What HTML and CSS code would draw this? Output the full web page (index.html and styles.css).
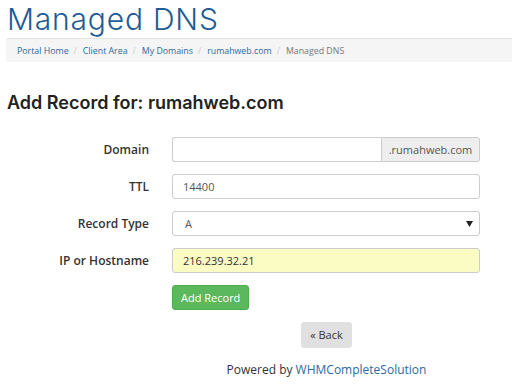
FILE: index.html
```html
<!DOCTYPE html>
<html>
<head>
<meta charset="utf-8">
<link rel="stylesheet" href="styles.css">
</head>
<body>
<div class="page">
  <h1 class="title">Managed DNS</h1>
  <ol class="crumbs">
    <li><a href="#">Portal Home</a></li>
    <li><a href="#">Client Area</a></li>
    <li><a href="#">My Domains</a></li>
    <li><a href="#">rumahweb.com</a></li>
    <li class="active">Managed DNS</li>
  </ol>
  <h2 class="heading">Add Record for: rumahweb.com</h2>
  <form class="form">
    <div class="row">
      <label class="label">Domain</label>
      <div class="group">
        <input class="input grow" type="text" value="">
        <span class="addon">.rumahweb.com</span>
      </div>
    </div>
    <div class="row">
      <label class="label">TTL</label>
      <input class="input" type="text" value="14400">
    </div>
    <div class="row">
      <label class="label">Record Type</label>
      <div class="select">
        <span class="sel-val">A</span>
        <svg class="caret" width="7" height="6" viewBox="0 0 7 6"><path d="M0 0H7L3.5 6Z" fill="#222"/></svg>
      </div>
    </div>
    <div class="row">
      <label class="label">IP or Hostname</label>
      <input class="input yellow" type="text" value="216.239.32.21">
    </div>
    <div class="row btnrow">
      <span class="label"></span>
      <button type="button" class="btn-add">Add Record</button>
    </div>
  </form>
  <div class="center">
    <button type="button" class="btn-back">« Back</button>
    <p class="powered">Powered by <a href="#">WHMCompleteSolution</a></p>
  </div>
</div>
</body>
</html>
```
FILE: styles.css
```css
html, body {
  margin: 0;
  padding: 0;
  background: #fff;
}
body {
  font-family: "Open Sans", "DejaVu Sans", sans-serif;
  color: #333;
  width: 512px;
  overflow: hidden;
}
.page {
  padding: 0 0 0 6px;
}
.title {
  margin: 0;
  padding: 1px 0 0 1px;
  font-family: Inter, "Noto Sans", sans-serif;
  font-weight: 300;
  font-size: 30px;
  line-height: 36px;
  color: #1f5c96;
  letter-spacing: 0.8px;
}
.crumbs {
  list-style: none;
  margin: 1px 0 0 0;
  padding: 0 0 0 11px;
  height: 23px;
  display: flex;
  align-items: center;
  background: #f5f5f5;
  border-top: 1px solid #e2e2e2;
  border-radius: 3px 0 0 3px;
  font-size: 8.8px;
}
.crumbs li {
  color: #777;
}
.crumbs li + li::before {
  content: "/";
  color: #ccc;
  padding: 0 6px 0 5px;
}
.crumbs a {
  color: #2b6a9e;
  text-decoration: none;
}
.heading {
  margin: 29px 0 0 1px;
  font-family: Inter, "Noto Sans", sans-serif;
  font-weight: 600;
  font-size: 18px;
  line-height: 24px;
  color: #222;
}
.form {
  margin-top: 22px;
}
.row {
  display: flex;
  align-items: center;
  margin-bottom: 12px;
  width: 474px;
}
.label {
  width: 143px;
  flex: none;
  text-align: right;
  font-weight: 600;
  font-size: 12px;
  color: #333;
  padding-right: 23px;
}
.input, .select {
  box-sizing: border-box;
  flex: 1;
  height: 25px;
  border: 1px solid #ccc;
  border-radius: 3px;
  padding: 0 10px;
  font-family: "Open Sans", sans-serif;
  font-size: 11px;
  color: #555;
  background: #fff;
  margin: 0;
  min-width: 0;
}
.yellow {
  background: #fafcc4;
  color: #333;
}
.group {
  flex: 1;
  display: flex;
}
.group .input {
  border-radius: 3px 0 0 3px;
  border-right: 0;
}
.addon {
  box-sizing: border-box;
  height: 25px;
  width: 99px;
  display: flex;
  align-items: center;
  justify-content: center;
  background: #eee;
  border: 1px solid #ccc;
  border-radius: 0 3px 3px 0;
  font-size: 11px;
  color: #555;
}
.select {
  display: flex;
  align-items: center;
  justify-content: space-between;
  padding: 0 6px 0 12px;
}
.btnrow {
  margin-top: 1px;
}
.btn-add {
  background: #5cb85c;
  border: 1px solid #4cae4c;
  color: #fff;
  border-radius: 3px;
  height: 25px;
  padding: 0 8px;
  font-family: "Open Sans", sans-serif;
  font-size: 11px;
}
.center {
  padding-left: 135px;
  text-align: center;
}
.btn-back {
  margin-top: -1px;
  background: #e0e0e0;
  border: 1px solid #e0e0e0;
  color: #333;
  border-radius: 3px;
  height: 26px;
  width: 51px;
  padding: 0;
  font-family: "Open Sans", sans-serif;
  font-size: 11px;
}
.powered {
  margin: 13px 0 0 0;
  font-size: 12px;
  color: #333;
}
.powered a {
  color: #2b6a9e;
  text-decoration: none;
}
```
